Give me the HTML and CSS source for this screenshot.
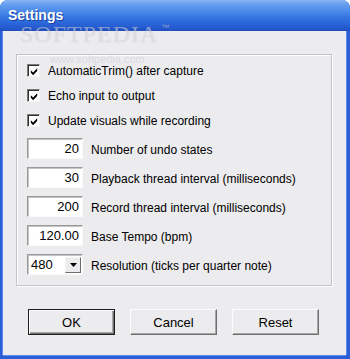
FILE: index.html
```html
<!DOCTYPE html>
<html lang="en">
<head>
  <meta charset="UTF-8">
  <title>Settings</title>
  <link rel="stylesheet" href="styles.css">
</head>
<body>

  <div class="window">
    <div class="titlebar">
      <span class="title">Settings</span>
    </div>

    <div class="client">
      <div class="groupbox">
        <label class="check-row">
          <span class="checkbox"><svg width="11" height="11" viewBox="0 0 11 11"><path d="M2 4 L4.5 6.5 L9 2 L9 5 L4.5 9.5 L2 7 Z" fill="#000"/></svg></span>
          AutomaticTrim() after capture
        </label>
        <label class="check-row">
          <span class="checkbox"><svg width="11" height="11" viewBox="0 0 11 11"><path d="M2 4 L4.5 6.5 L9 2 L9 5 L4.5 9.5 L2 7 Z" fill="#000"/></svg></span>
          Echo input to output
        </label>
        <label class="check-row">
          <span class="checkbox"><svg width="11" height="11" viewBox="0 0 11 11"><path d="M2 4 L4.5 6.5 L9 2 L9 5 L4.5 9.5 L2 7 Z" fill="#000"/></svg></span>
          Update visuals while recording
        </label>

        <div class="fields">
          <div class="field-row">
            <input class="num-input" type="text" value="20">
            <span class="field-label">Number of undo states</span>
          </div>
          <div class="field-row">
            <input class="num-input" type="text" value="30">
            <span class="field-label">Playback thread interval (milliseconds)</span>
          </div>
          <div class="field-row">
            <input class="num-input" type="text" value="200">
            <span class="field-label">Record thread interval (milliseconds)</span>
          </div>
          <div class="field-row">
            <input class="num-input" type="text" value="120.00">
            <span class="field-label">Base Tempo (bpm)</span>
          </div>
          <div class="field-row">
            <div class="combo">
              <span class="combo-value">480</span>
              <span class="combo-btn"><svg width="7" height="4" viewBox="0 0 7 4"><path d="M0 0 H7 L3.5 4 Z" fill="#000"/></svg></span>
            </div>
            <span class="field-label">Resolution (ticks per quarter note)</span>
          </div>
        </div>
      </div>

      <div class="buttons">
        <button class="btn btn-default">OK</button>
        <button class="btn">Cancel</button>
        <button class="btn">Reset</button>
      </div>
    </div>

    <!-- watermark du screenshot -->
    <div class="watermark">SOFTPEDIA<span class="tm">™</span></div>
    <div class="watermark-url">www.softpedia.com</div>
  </div>

</body>
</html>
```

FILE: styles.css
```css
* {
  box-sizing: border-box;
  margin: 0;
  padding: 0;
}

body {
  font-family: "Liberation Sans", Arial, sans-serif;
  font-size: 12px;
  color: #000;
  background: #fff;
}

.window {
  width: 350px;
  height: 359px;
  display: flex;
  flex-direction: column;
  background: #2c5fd6;
  border-radius: 8px 8px 0 0;
  overflow: hidden;
  position: relative;
}

.titlebar {
  height: 31px;
  display: flex;
  align-items: center;
  padding: 0 0 2px 8px;
  background: linear-gradient(to bottom, #8bb8f5 0%, #6aa2f0 12%, #4d8be9 35%, #3676e2 55%, #2a66da 75%, #2558cc 92%, #1f4cbc 100%);
}

.title {
  font-size: 14px;
  font-weight: bold;
  color: #fff;
  text-shadow: 1px 1px 0 #1a3d9a;
}

.client {
  flex: 1;
  margin: 0 4px 4px 3px;
  padding: 23px 14px 0 13px;
  background: #ecebee;
  box-shadow: -1px 0 0 #5b8cef, 1px 0 0 #5b8cef, 0 1px 0 #5b8cef;
}

.groupbox {
  height: 232px;
  padding: 3px 10px 0 10px;
  border: 1px solid #c4c2c6;
  box-shadow: inset 1px 1px 0 #fff, 1px 1px 0 #fff;
}

.check-row {
  height: 25px;
  display: flex;
  align-items: center;
  gap: 8px;
}

.checkbox {
  width: 13px;
  height: 13px;
  background: #fff;
  border: 1px solid;
  border-color: #7a7a7a #f4f4f4 #f4f4f4 #7a7a7a;
  box-shadow: inset 1px 1px 0 #303030;
  display: flex;
  align-items: center;
  justify-content: center;
}

.checkbox svg {
  margin: 1px 0 0 1px;
}

.fields {
  margin-top: 5px;
  display: flex;
  flex-direction: column;
  gap: 8px;
}

.field-row {
  display: flex;
  align-items: flex-end;
  gap: 8px;
}

.num-input {
  width: 56px;
  height: 21px;
  padding: 0 3px 1px 0;
  font-family: inherit;
  font-size: 13px;
  text-align: right;
  color: #000;
  background: #fff;
  border: 1px solid;
  border-color: #999 #fafafa #fafafa #999;
  box-shadow: inset 1px 1px 0 #c4c4c4;
  outline: none;
}

.field-label {
  padding-bottom: 2px;
}

.combo {
  width: 56px;
  height: 21px;
  display: flex;
  align-items: stretch;
  background: #fff;
  border: 1px solid;
  border-color: #999 #fafafa #fafafa #999;
  box-shadow: inset 1px 1px 0 #c4c4c4;
  padding: 2px 1px 1px 2px;
}

.combo-value {
  flex: 1;
  font-size: 13px;
  line-height: 15px;
  padding-left: 1px;
}

.combo-btn {
  width: 16px;
  display: flex;
  align-items: center;
  justify-content: center;
  background: #ecebee;
  border: 1px solid;
  border-color: #f4f4f4 #6c6c6c #6c6c6c #f4f4f4;
}

.buttons {
  margin-top: 23px;
  padding-left: 12px;
  display: flex;
  gap: 15px;
}

.btn {
  width: 87px;
  height: 26px;
  font-family: inherit;
  font-size: 13px;
  color: #000;
  background: #ecebee;
  border: 1px solid;
  border-color: #fdfdfd #6e6e6e #6e6e6e #fdfdfd;
  box-shadow: inset -1px -1px 0 #a8a8a8;
  cursor: pointer;
}

.btn-default {
  border: 1px solid #1e1e1e;
  box-shadow: inset 1px 1px 0 #fdfdfd, inset -1px -1px 0 #6e6e6e, inset -2px -2px 0 #a8a8a8;
}

.watermark {
  position: absolute;
  left: 20px;
  top: 21px;
  font-family: "Liberation Serif", serif;
  font-size: 24px;
  letter-spacing: 1px;
  color: rgba(255, 255, 255, 0.4);
  text-shadow: 0 0 1px rgba(110, 110, 130, 0.3);
  pointer-events: none;
}

.watermark .tm {
  font-family: "Liberation Sans", sans-serif;
  font-size: 8px;
  vertical-align: 12px;
  margin-left: 3px;
}

.watermark-url {
  position: absolute;
  left: 50px;
  top: 53px;
  font-size: 11px;
  color: rgba(150, 150, 160, 0.22);
  pointer-events: none;
}
```
